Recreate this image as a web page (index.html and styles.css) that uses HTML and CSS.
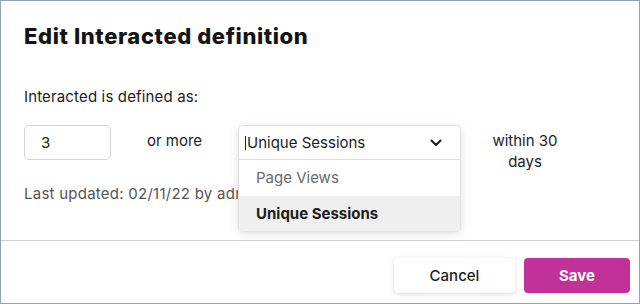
FILE: index.html
```html
<!DOCTYPE html>
<html lang="en">
<head>
<meta charset="utf-8">
<title>Edit Interacted definition</title>
<link rel="stylesheet" href="styles.css">
</head>
<body>
<div class="dialog">
  <div class="content">
    <h1 class="title">Edit Interacted definition</h1>
    <p class="label">Interacted is defined as:</p>
    <div class="row">
      <div class="count">3</div>
      <div class="text or-more">or more</div>
      <div class="select">
        <div class="menu">
          <div class="menu-head">
            <span class="caret"></span><span class="value">Unique Sessions</span>
            <svg class="chevron" width="12" height="8" viewBox="0 0 12 8"><path d="M1.5 1.5 L6 6 L10.5 1.5" fill="none" stroke="#1c1c1c" stroke-width="2" stroke-linecap="round" stroke-linejoin="round"/></svg>
          </div>
          <div class="option">Page Views</div>
          <div class="option selected">Unique Sessions</div>
        </div>
      </div>
      <div class="text within">within 30 days</div>
    </div>
    <p class="updated">Last updated: 02/11/22 by admin</p>
  </div>
  <div class="footer">
    <button class="btn cancel">Cancel</button>
    <button class="btn save">Save</button>
  </div>
</div>
</body>
</html>
```
FILE: styles.css
```css
html, body {
  margin: 0;
  padding: 0;
  background: #ffffff;
}
body {
  font-family: Inter, "Liberation Sans", sans-serif;
  color: #1c1c1c;
}
.dialog {
  box-sizing: border-box;
  width: 640px;
  height: 304px;
  border: 1px solid #8fa4b4;
  display: flex;
  flex-direction: column;
  background: #fff;
}
.content {
  flex: 1;
  padding: 21px 23px 0;
}
.title {
  margin: 0;
  font-size: 22px;
  line-height: 28px;
  font-weight: 800;
  color: #141414;
  letter-spacing: 0.6px;
}
.label {
  margin: 37px 0 0;
  font-size: 15px;
  line-height: 20px;
  letter-spacing: 0.15px;
}
.row {
  margin-top: 18px;
  display: grid;
  grid-template-columns: 87px 127px 223px 128px;
  align-items: start;
  height: 35px;
}
.count {
  box-sizing: border-box;
  height: 35px;
  border: 1px solid #d3d3d3;
  border-radius: 5px;
  padding-left: 16px;
  font-size: 15px;
  line-height: 33px;
}
.text {
  font-size: 15px;
  line-height: 21px;
  padding-top: 5px;
  text-align: center;
}
.within {
  padding-left: 22px;
  padding-right: 22px;
}
.select {
  position: relative;
  height: 35px;
}
.menu {
  position: absolute;
  top: 0;
  left: 0;
  width: 223px;
  box-sizing: border-box;
  border: 1px solid #e2e2e2;
  border-radius: 5px;
  background: #fff;
  box-shadow: 0 2px 10px rgba(0, 0, 0, 0.13);
  overflow: hidden;
  z-index: 2;
}
.menu-head {
  height: 33px;
  border-bottom: 1px solid #dedede;
  display: flex;
  align-items: center;
  padding: 0 18px 0 6px;
  font-size: 15px;
  line-height: 20px;
}
.caret {
  width: 1px;
  height: 14px;
  background: #222;
  margin-right: 1px;
}
.value {
  flex: 1;
}
.chevron {
  display: block;
}
.option {
  height: 36px;
  padding-left: 17px;
  font-size: 15px;
  line-height: 36px;
  color: #6a6a6a;
}
.option.selected {
  height: 35px;
  line-height: 35px;
  background: #efefef;
  color: #1c1c1c;
  font-weight: 700;
}
.updated {
  margin: 24px 0 0;
  font-size: 15px;
  line-height: 20px;
  color: #555;
  white-space: nowrap;
  letter-spacing: 0.25px;
}
.footer {
  box-sizing: border-box;
  height: 63px;
  flex: none;
  border-top: 1px solid #cdd1d4;
  display: flex;
  justify-content: flex-end;
  align-items: flex-start;
  gap: 9px;
  padding: 17px 9px 0 0;
}
.btn {
  height: 35px;
  border: none;
  border-radius: 4px;
  font-family: Inter, "Liberation Sans", sans-serif;
  font-size: 15px;
  cursor: pointer;
}
.cancel {
  width: 121px;
  background: #fff;
  color: #1c1c1c;
  font-weight: 500;
  box-shadow: 0 1px 4px rgba(0, 0, 0, 0.16);
}
.save {
  width: 106px;
  background: #c2309a;
  color: #fff;
  font-weight: 700;
}
```
